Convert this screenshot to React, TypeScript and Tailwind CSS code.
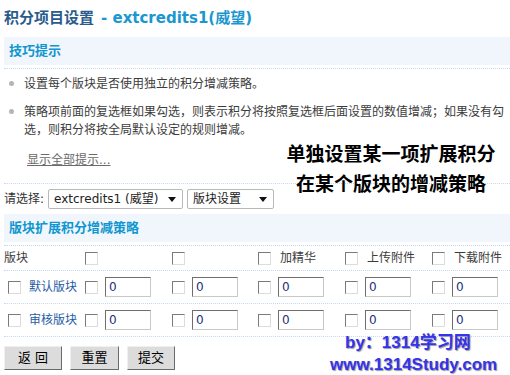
import React from "react";

const font = { fontFamily: '"DejaVu Sans", "Noto Sans CJK SC", sans-serif' };

function Cb() {
  return (
    <span className="inline-block w-[13px] h-[13px] bg-white border border-t-[#7a7a7a] border-l-[#7a7a7a] border-b-[#dcdcdc] border-r-[#dcdcdc] shrink-0" />
  );
}

function Inp() {
  return (
    <span className="inline-flex items-center w-[46px] h-[20px] bg-white border border-t-[#6e6e6e] border-l-[#6e6e6e] border-b-[#c8c8c8] border-r-[#c8c8c8] pl-[3px] text-[12px] text-[#22307a] shrink-0">
      0
    </span>
  );
}

function Sel({ w, text }: { w: string; text: string }) {
  return (
    <div className={`${w} h-[20px] flex items-center justify-between border border-[#b8b8b8] rounded-[2px] bg-white pl-[5px] pr-[6px] text-[12px] text-[#222]`}>
      <span>{text}</span>
      <svg width="8" height="5" viewBox="0 0 8 5"><path d="M0 0h8L4 5z" fill="#111" /></svg>
    </div>
  );
}

function Dot() {
  return <div className="ml-[4px] border-t border-dotted border-[#c3daee]" />;
}

function Btn({ w, children }: { w: string; children: React.ReactNode }) {
  return (
    <div className={`${w} h-[24px] flex items-center justify-center bg-[#dcdcdc] border border-t-[#f0f0f0] border-l-[#f0f0f0] border-b-[#6a6a6a] border-r-[#6a6a6a] text-[13px] text-black`}>
      {children}
    </div>
  );
}

export default function App() {
  const cols = "grid grid-cols-[82px_87px_86px_87px_87px_1fr] items-center";
  return (
    <div className="relative w-[510px] h-[375px] bg-white overflow-hidden text-[#3c3c3c]" style={font}>
      <div className="h-[37px] flex items-center pl-[4px] pb-[1px] text-[15px] font-bold">
        <span className="text-[#2a5b8c]">积分项目设置</span>
        <span className="text-[#1b97d0] ml-[7px]">- extcredits1(威望)</span>
      </div>
      <div className="ml-[4px] h-[28px] bg-[#f1f6fd] flex items-center pl-[5px] text-[13px] font-bold text-[#0f96d0]">技巧提示</div>
      <div className="h-[3px]" />
      <Dot />
      <div className="pt-[6px] text-[12px] leading-[18px]">
        <div className="flex">
          <span className="w-[24px] flex justify-start pl-[9px] pt-[6px]"><span className="block w-[5px] h-[5px] rounded-full bg-[#b5b5b5]" /></span>
          <span>设置每个版块是否使用独立的积分增减策略。</span>
        </div>
        <div className="flex mt-[10px]">
          <span className="w-[24px] shrink-0 flex justify-start pl-[9px] pt-[6px]"><span className="block w-[5px] h-[5px] rounded-full bg-[#b5b5b5]" /></span>
          <span>策略项前面的复选框如果勾选，则表示积分将按照复选框后面设置的数值增减；如果没有勾选，则积分将按全局默认设定的规则增减。</span>
        </div>
        <div className="mt-[12px] pl-[27px] text-[#6a6a6a] underline">显示全部提示...</div>
      </div>
      <div className="h-[14px]" />
      <Dot />
      <div className="mt-[5px] flex items-center gap-[4px] pl-[4px] text-[12px]">
        <span className="text-[#333]">请选择:</span>
        <Sel w="w-[135px]" text="extcredits1 (威望)" />
        <Sel w="w-[87px]" text="版块设置" />
      </div>
      <div className="mt-[5px] ml-[4px] h-[28px] bg-[#f1f6fd] flex items-center pl-[5px] text-[13px] font-bold text-[#0f96d0]">版块扩展积分增减策略</div>
      <div className="h-[3px]" />
      <Dot />
      <div className={`${cols} h-[24px] text-[12px]`}>
        <span className="pl-[4px]">版块</span>
        <span className="pl-[3px] flex"><Cb /></span>
        <span className="pl-[3px] flex"><Cb /></span>
        <span className="pl-[3px] flex items-center gap-[9px]"><Cb /><span>加精华</span></span>
        <span className="pl-[3px] flex items-center gap-[9px]"><Cb /><span>上传附件</span></span>
        <span className="pl-[3px] flex items-center gap-[9px]"><Cb /><span>下载附件</span></span>
      </div>
      <Dot />
      {["默认版块", "审核版块"].map((n) => (
        <React.Fragment key={n}>
          <div className={`${cols} h-[32px] text-[12px]`}>
            <span className="pl-[8px] flex items-center gap-[8px]"><Cb /><span className="text-[#1f5ca6]">{n}</span></span>
            {[0, 1, 2, 3, 4].map((i) => (
              <span key={i} className="pl-[3px] flex items-center gap-[7px]"><Cb /><Inp /></span>
            ))}
          </div>
          <Dot />
        </React.Fragment>
      ))}
      <div className="mt-[9px] pl-[4px] flex gap-[8px]">
        <Btn w="w-[58px]">返&nbsp;回</Btn>
        <Btn w="w-[49px]">重置</Btn>
        <Btn w="w-[48px]">提交</Btn>
      </div>

      <div className="absolute left-[280px] top-[138px] w-[222px] text-center text-[19px] leading-[30px] font-bold text-black" style={{ fontFamily: '"Noto Sans CJK SC", sans-serif' }}>
        <div>单独设置某一项扩展积分</div>
        <div>在某个版块的增减策略</div>
      </div>

      <div className="absolute left-[330px] top-[332px] text-[17px] leading-[22px] font-bold text-[#3434ec] [text-shadow:1px_1px_1px_#9a9a9a]" style={{ fontFamily: '"Liberation Sans", "Noto Sans CJK SC", sans-serif' }}>
        <div className="pl-[15px]">by：1314学习网</div>
        <div>www.1314Study.com</div>
      </div>
    </div>
  );
}
